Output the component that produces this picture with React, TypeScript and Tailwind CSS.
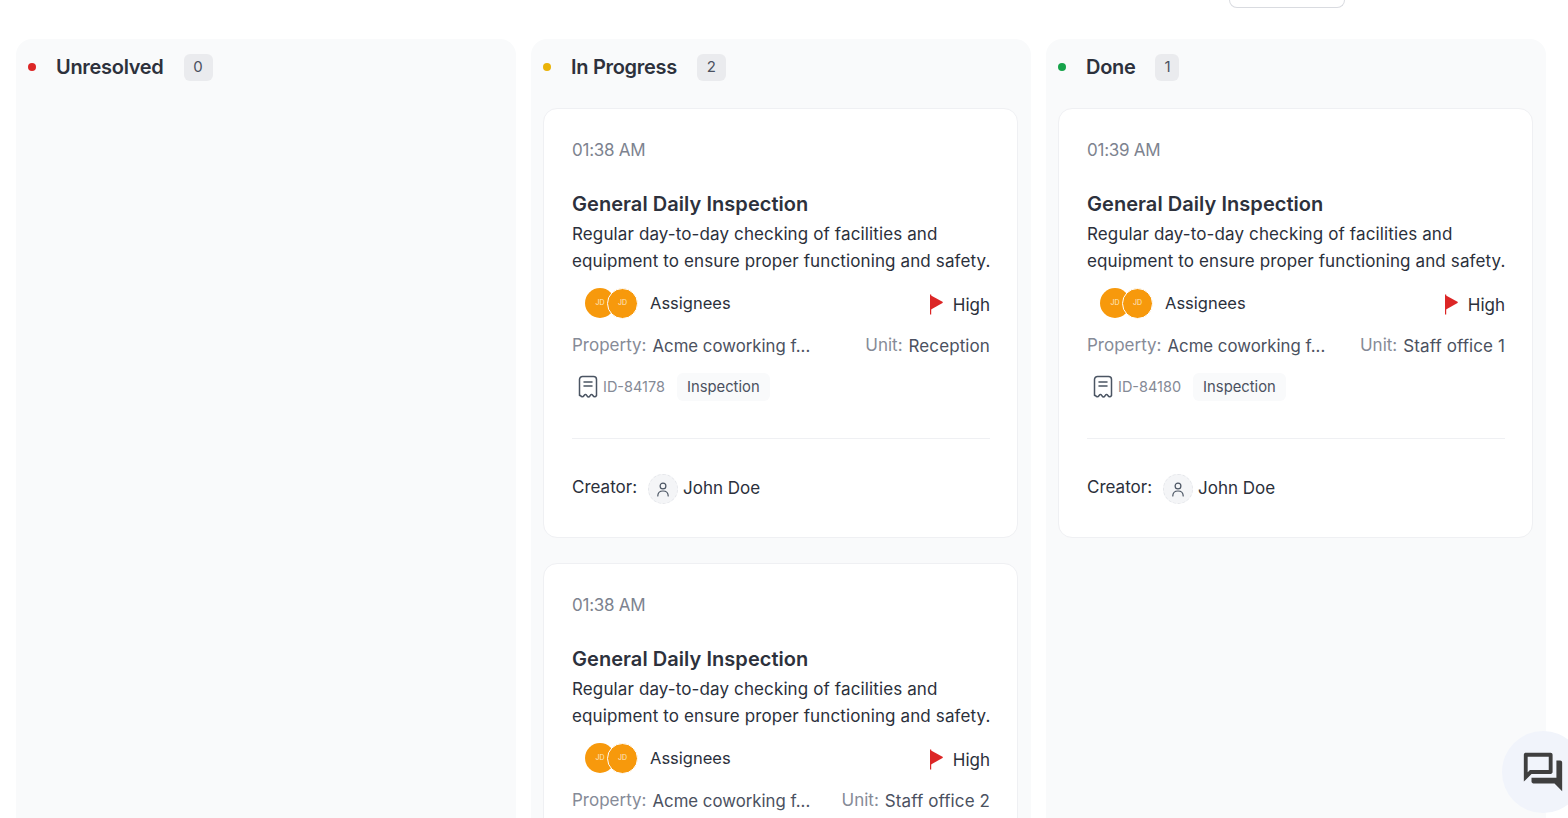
import { MdOutlineQuestionAnswer } from 'react-icons/md'

type Ticket = { time: string; id: string; unit: string }

const columns: { title: string; dot: string; tickets: Ticket[] }[] = [
  { title: 'Unresolved', dot: 'bg-[#dc2626]', tickets: [] },
  {
    title: 'In Progress',
    dot: 'bg-[#eab308]',
    tickets: [
      { time: '01:38 AM', id: 'ID-84178', unit: 'Reception' },
      { time: '01:38 AM', id: 'ID-84179', unit: 'Staff office 2' },
    ],
  },
  { title: 'Done', dot: 'bg-[#16a34a]', tickets: [{ time: '01:39 AM', id: 'ID-84180', unit: 'Staff office 1' }] },
]

function Flag() {
  return (
    <svg width="15" height="21" viewBox="0 0 15 21" className="mt-[-3px]">
      <path d="M1 0.5h1.200v20H1z" fill="#dc2626" />
      <path d="M2 1.500l11.500 6.200q.8.6 0 1.200L2 15.500z" fill="#dc2626" />
    </svg>
  )
}

function ReceiptIcon() {
  return (
    <svg width="20" height="24" viewBox="0 0 20 24" fill="none" stroke="#4b5563" strokeWidth="1.5" strokeLinecap="round" strokeLinejoin="round">
      <path d="M1.500 20.500V4.500a3 3 0 0 1 3-3h11a3 3 0 0 1 3 3v16c-1 1.700-2.600 1.700-3.600 0-1-1.300-2-1.300-3 .5-.8 1.300-2 1.300-2.800 0-1-1.800-2-1.800-3-.5-1 1.700-2.600 1.700-3.600 0z" />
      <path d="M6 7h8M6 11h8" />
    </svg>
  )
}

function UserIcon() {
  return (
    <svg width="14" height="15" viewBox="0 0 14 15" fill="none" stroke="#4b5563" strokeWidth="1.2" strokeLinecap="round">
      <circle cx="7" cy="4" r="2.900" />
      <path d="M1.800 14c0-3.200 2.200-5 5.200-5s5.200 1.800 5.200 5" />
    </svg>
  )
}

function Card({ ticket }: { ticket: Ticket }) {
  return (
    <div className="h-[430px] rounded-[14px] border border-[#eff0f3] bg-white pl-[28px] pr-[27px] pt-[28px]">
      <p className="h-[26px] text-[17px] leading-[26px] tracking-[-0.25px] text-[#7d838f]">{ticket.time}</p>
      <h3 className="mt-[28px] h-[26px] text-[20px] font-[580] leading-[26px] tracking-[0.05px] text-[#2d313c]">General Daily Inspection</h3>
      <p className="mr-[-8px] mt-[4px] text-[17px] leading-[27px] tracking-[0.12px] text-[#2b303b]">
        Regular day-to-day checking of facilities and equipment to ensure proper functioning and safety.
      </p>
      <div className="mt-[12px] flex h-[32px] items-center justify-between">
        <div className="flex items-center pl-[13px]">
          <span className="flex size-[30px] items-center justify-center rounded-full bg-[#f7990c] text-[7px] text-[#fde9c8]">JD</span>
          <span className="ml-[-8px] flex size-[31px] items-center justify-center rounded-full border border-white bg-[#f7990c] text-[7px] text-[#fde9c8]">JD</span>
          <span className="ml-[12px] text-[16.500px] text-[#2b303b]">Assignees</span>
        </div>
        <div className="mt-[5px] flex items-center gap-[9px]">
          <Flag />
          <span className="text-[17px] text-[#2b303b]">High</span>
        </div>
      </div>
      <div className="mt-[13px] flex h-[30px] items-center justify-between whitespace-nowrap">
        <div className="flex items-center gap-[6px]">
          <span className="mt-[-2px] text-[17px] text-[#868b97]">Property:</span>
          <span className="text-[16.800px] text-[#4b5160]">Acme coworking f...</span>
        </div>
        <div className="flex items-center gap-[6px]">
          <span className="mt-[-2px] text-[17px] text-[#868b97]">Unit:</span>
          <span className="text-[17px] tracking-[0.1px] text-[#4b5160]">{ticket.unit}</span>
        </div>
      </div>
      <div className="mt-[9px] flex h-[32px] items-center pl-[6px]">
        <ReceiptIcon />
        <span className="ml-[5px] text-[14.500px] text-[#858a96]">{ticket.id}</span>
        <span className="ml-[12px] rounded-md bg-[#f9fafb] px-[10px] py-[3px] text-[14.800px] text-[#4b5160]">Inspection</span>
      </div>
      <div className="mt-[35px] border-t border-[#eff0f3]" />
      <div className="mt-[35px] flex items-center">
        <span className="mt-[-2px] text-[17px] text-[#2b303b]">Creator:</span>
        <span className="ml-[11px] flex size-[30px] items-center justify-center rounded-full border border-dashed border-[#e5e7eb] bg-[#f4f5f7]">
          <UserIcon />
        </span>
        <span className="ml-[5px] text-[17px] text-[#2b303b]">John Doe</span>
      </div>
    </div>
  )
}

export default function App() {
  return (
    <div className="relative h-[818px] overflow-hidden bg-white font-['Inter','Liberation_Sans',sans-serif]">
      <div className="flex h-[39px] justify-end pr-[223px]">
        <div className="h-[8px] w-[116px] rounded-b-xl border border-t-0 border-[#d9dbe0] bg-white" />
      </div>
      <div className="grid h-[779px] grid-cols-3 gap-[15px] pl-4 pr-[22px]">
        {columns.map((col) => (
          <section key={col.title} className="rounded-t-[16px] bg-[#f9fafb] pl-[12px] pr-[13px]">
            <div className="flex h-[69px] items-center pb-[13px]">
              <span className={`size-[8px] rounded-full ${col.dot}`} />
              <h2 className="ml-[20px] text-[20px] font-[580] tracking-[-0.3px] text-[#2d313c]">{col.title}</h2>
              <span
                className={`ml-[20px] flex h-[27px] items-center justify-center rounded-md bg-[#eaebee] text-[15px] text-[#4b5160] ${
                  col.tickets.length === 1 ? 'w-[24px]' : 'w-[29px]'
                }`}
              >
                {col.tickets.length}
              </span>
            </div>
            <div className="flex flex-col gap-[25px]">
              {col.tickets.map((t) => (
                <Card key={t.id} ticket={t} />
              ))}
            </div>
          </section>
        ))}
      </div>
      <button className="absolute left-[1502px] top-[731px] flex size-[82px] items-center justify-center rounded-full bg-[#f1f4fb] text-[#3f3f3f]">
        <MdOutlineQuestionAnswer size={46} />
      </button>
    </div>
  )
}
